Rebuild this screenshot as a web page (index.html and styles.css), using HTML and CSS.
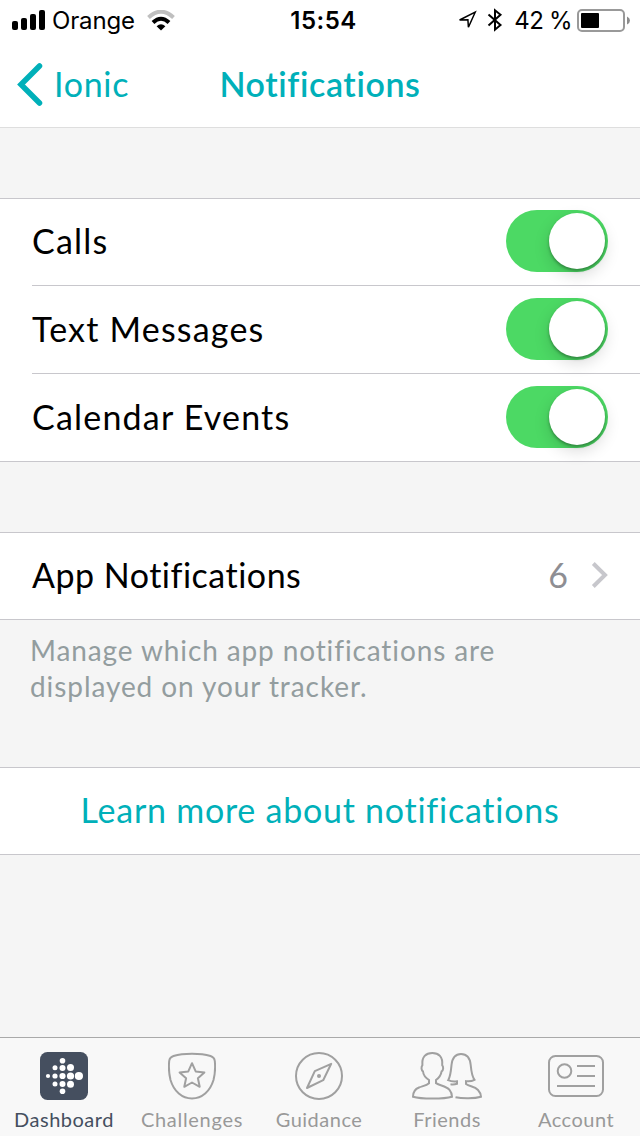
FILE: index.html
```html
<!DOCTYPE html>
<html lang="en">
  <head>
    <meta charset="UTF-8" />
    <meta name="viewport" content="width=device-width, initial-scale=1.0" />
    <title>Notifications</title>
    <link rel="stylesheet" href="styles.css">
  </head>
  <body>
    <div class="status-bar">
      <div class="status-left">
        <svg class="signal" width="34" height="20" viewBox="0 0 34 20">
          <rect x="0" y="11" width="6" height="9" rx="2" />
          <rect x="9" y="8" width="6" height="12" rx="2" />
          <rect x="18" y="4" width="6" height="16" rx="2" />
          <rect x="27" y="0" width="6" height="20" rx="2" />
        </svg>
        <span class="carrier">Orange</span>
        <svg class="wifi" width="28" height="21" viewBox="0 0 28 21">
          <path d="M1.5 7.5 Q14 -4 26.5 7.5" fill="none" stroke="#bfbfbf" stroke-width="4" />
          <path d="M6 12.5 Q14 5 22 12.5" fill="none" stroke="#000" stroke-width="4" />
          <path d="M9.6 16.2 Q14 12.4 18.4 16.2 L14 20.5 Z" />
        </svg>
      </div>
      <span class="time">15:54</span>
      <div class="status-right">
        <svg class="location" width="20" height="20" viewBox="0 0 20 20">
          <path d="M1.6 10 L17.2 2.2 L10.4 17.2 L9.9 9.8 Z" fill="none" stroke="#000" stroke-width="1.5" />
        </svg>
        <svg class="bluetooth" width="16" height="24" viewBox="0 0 16 24">
          <path d="M1.5 6.5 L13.5 17 L8 21.7 V2.3 L13.5 6.8 L1.5 17.5" fill="none" stroke="#000" stroke-width="2" />
        </svg>
        <span class="percent">42 %</span>
        <svg class="battery" width="54" height="24" viewBox="0 0 54 24">
          <rect x="1" y="1" width="46" height="21" rx="4" fill="none" stroke="#999" stroke-width="2" />
          <rect x="4" y="4" width="18" height="15" rx="1" />
          <path d="M50 7.5 Q53 9 53 11.5 Q53 14 50 15.5 Z" fill="#8c8c8c" />
        </svg>
      </div>
    </div>

    <div class="nav-bar">
      <a class="back">
        <svg width="28" height="44" viewBox="0 0 28 44">
          <path d="M22.5 4 L4 22.5 L22.5 41" fill="none" stroke="#00b0b9" stroke-width="5.5" stroke-linecap="round" />
        </svg>
        <span class="back-label">Ionic</span>
      </a>
      <h1>Notifications</h1>
    </div>

    <div class="content">
      <div class="list">
        <div class="row">
          <span class="calls">Calls</span>
          <div class="switch"><div class="knob"></div></div>
        </div>
        <div class="row">
          <span class="texts">Text Messages</span>
          <div class="switch"><div class="knob"></div></div>
        </div>
        <div class="row">
          <span class="events">Calendar Events</span>
          <div class="switch"><div class="knob"></div></div>
        </div>
      </div>

      <div class="list">
        <div class="row">
          <span class="apps">App Notifications</span>
          <div class="detail">
            <span>6</span>
            <svg width="18" height="28" viewBox="0 0 18 28">
              <path d="M2.3 2.5 L14 14 L2.3 25.5" fill="none" stroke="#c7c7cc" stroke-width="4" />
            </svg>
          </div>
        </div>
      </div>
      <p class="hint">
        <span class="hint-first">Manage which app notifications are</span><br />
        <span class="hint-second">displayed on your tracker.</span>
      </p>

      <a class="learn-more">Learn more about notifications</a>
    </div>

    <div class="tab-bar">
      <div class="tab active">
        <svg width="48" height="48" viewBox="0 0 48 48">
          <rect width="48" height="48" rx="7.5" fill="#454f5f" />
          <g fill="#fff">
            <circle cx="8" cy="24" r="2.1" />
            <circle cx="15" cy="15.8" r="2.5" />
            <circle cx="15" cy="24" r="2.6" />
            <circle cx="15" cy="32" r="2.5" />
            <circle cx="22.5" cy="8.7" r="2.8" />
            <circle cx="22.5" cy="16" r="3" />
            <circle cx="22.5" cy="24" r="3.1" />
            <circle cx="22.5" cy="32" r="3" />
            <circle cx="22.5" cy="39.3" r="2.8" />
            <circle cx="30.5" cy="15.6" r="3.5" />
            <circle cx="30.5" cy="24" r="3.6" />
            <circle cx="30.5" cy="32.2" r="3.5" />
            <circle cx="38.9" cy="24" r="4.1" />
          </g>
        </svg>
        <span class="label-dashboard">Dashboard</span>
      </div>
      <div class="tab">
        <svg width="48" height="48" viewBox="0 0 48 48">
          <path d="M24 1.7 C31 1.7 38 2.6 42.5 4 C45.5 5 46.5 6.5 46.8 9 C47.3 14 47 22 45.5 28 C42 39.5 34 46.5 24 46.5 C14 46.5 6 39.5 2.5 28 C1 22 0.7 14 1.2 9 C1.5 6.5 2.5 5 5.5 4 C10 2.6 17 1.7 24 1.7 Z" />
          <path d="M24 11.2 L27.7 19.4 L36.4 20.4 L29.9 26.2 L31.7 34.8 L24 30.5 L16.3 34.8 L18.1 26.2 L11.6 20.4 L20.3 19.4 Z" stroke-linejoin="round" />
        </svg>
        <span class="label-challenges">Challenges</span>
      </div>
      <div class="tab shifted">
        <svg width="48" height="48" viewBox="0 0 48 48">
          <circle cx="24" cy="24" r="23" />
          <path d="M36.2 11.8 L19.8 19.2 L12 36 L28.2 28.2 Z" stroke-linejoin="round" />
          <circle cx="24" cy="24" r="2" class="dot" />
        </svg>
        <span class="label-guidance">Guidance</span>
      </div>
      <div class="tab shifted">
        <svg width="70" height="48" viewBox="0 0 70 48">
          <path d="M17 28 C13.5 25.8 11.3 22.5 11 19.5 C9.3 18.6 9 15 10.4 13.2 C9.6 4.5 14 1 20.3 1 C26.6 1 31 4.5 30.2 13.2 C31.7 15 31.4 18.6 29.6 19.5 C29 22.8 27.1 25.8 24 28 V31.2 C28 33.8 34 33.8 37.5 37.8 C39.5 40.2 40 43 40 44.7 C32 47.2 9 47.2 1 44.7 C1 40.2 3.2 37 7 35.5 C11 34 14.8 33.3 17 31.2 Z" />
          <path d="M38.5 32.3 C40.5 32.6 43 32.5 45 31.8 V29.3 C42 29.7 39 29.5 36.2 28.2 C38.5 24.5 39 18.5 39.5 13 C40.3 5.5 43.5 2 49 2 C54.5 2 58 5.5 58.7 13 C59.2 18.5 60 24.5 62.5 27.8 C60 29.2 57 29.6 54 29.2 V32 C57.5 34.6 62.5 34.3 66 38 C68 40.2 69 42.7 69 44.7 C62.5 46.7 50.5 46.8 43.5 45.2" />
        </svg>
        <span class="label-friends">Friends</span>
      </div>
      <div class="tab">
        <svg width="56" height="48" viewBox="0 0 56 48">
          <rect x="1" y="4" width="54" height="40" rx="6.5" />
          <circle cx="16.5" cy="19" r="6.8" />
          <path d="M29 14 H47 M29 24 H47 M9 34 H47" />
        </svg>
        <span class="label-account">Account</span>
      </div>
    </div>
  </body>
</html>
```
FILE: styles.css
```css
* {
  box-sizing: border-box;
}

body {
  margin: 0;
  height: 1136px;
  display: flex;
  flex-direction: column;
  background: #f5f5f5;
  color: #000;
  font-family: Lato, sans-serif;
  font-size: 34px;
  line-height: 40px;
  font-variant-ligatures: none;
  overflow: hidden;
}

svg {
  display: block;
  flex: none;
}

span {
  white-space: nowrap;
}

/* Status bar */
.status-bar {
  display: grid;
  grid-template-columns: 1fr auto 1fr;
  height: 40px;
  padding: 1px 11px 0 12px;
  background: #fff;
  font-family: Inter, sans-serif;
  font-size: 24px;
  line-height: 40px;
}

.status-left,
.status-right {
  display: flex;
  align-items: center;
  height: 40px;
}

.status-right {
  justify-content: flex-end;
}

.signal {
  margin-top: -2px;
}

.carrier {
  margin-left: 6px;
  letter-spacing: -0.15px;
}

.wifi {
  margin-left: 12px;
  margin-top: -1px;
}

.time {
  margin-left: 6px;
  font-weight: 600;
  letter-spacing: 0.5px;
}

.location {
  margin-top: -2px;
}

.bluetooth {
  margin: -2px 11px 0 9px;
}

.percent {
  letter-spacing: -0.7px;
}

.battery {
  margin-left: 5px;
  margin-right: -2px;
}

/* Navigation bar */
.nav-bar {
  display: grid;
  grid-template-columns: 1fr auto 1fr;
  align-items: center;
  height: 88px;
  border-bottom: 1px solid #dedede;
  background: #fff;
  color: #00b0b9;
}

.back {
  display: flex;
  align-items: center;
  padding-left: 17px;
}

.back-label {
  margin-left: 9px;
  letter-spacing: 0.7px;
}

h1 {
  margin: 0;
  font-size: 34px;
  font-weight: 600;
  letter-spacing: 0.6px;
}

/* Grouped lists */
.content {
  flex: 1;
}

.list {
  margin-top: 70px;
  padding-left: 32px;
  border-top: 1px solid #c8c7cc;
  border-bottom: 1px solid #c8c7cc;
  background: #fff;
}

.row {
  display: flex;
  justify-content: space-between;
  align-items: center;
  height: 86px;
  padding: 0 32px 2px 0;
}

.row + .row {
  height: 88px;
  padding-bottom: 1px;
  border-top: 1px solid #c8c7cc;
}

.calls,
.texts,
.events {
  letter-spacing: 1.2px;
}

.apps {
  letter-spacing: 0.5px;
}

.switch {
  width: 102px;
  height: 62px;
  padding: 3px 3px 3px 43px;
  border-radius: 31px;
  background: #4cd964;
}

.knob {
  width: 56px;
  height: 56px;
  border-radius: 50%;
  background: #fff;
  box-shadow: 0 6px 16px rgba(0, 0, 0, 0.15), 0 2px 3px rgba(0, 0, 0, 0.3);
}

.detail {
  display: flex;
  align-items: center;
  gap: 23px;
  margin-right: -1px;
  color: #8e8e93;
}

.hint {
  margin: 0;
  padding: 12px 30px 0;
  height: 147px;
  color: #939d9f;
  font-size: 28px;
  line-height: 36px;
}

.hint-first {
  letter-spacing: 0.88px;
}

.hint-second {
  letter-spacing: 0.92px;
}

.learn-more {
  display: block;
  height: 88px;
  border-top: 1px solid #c8c7cc;
  border-bottom: 1px solid #c8c7cc;
  background: #fff;
  color: #00b0b9;
  line-height: 84px;
  letter-spacing: 0.75px;
  text-align: center;
}

/* Tab bar */
.tab-bar {
  display: grid;
  grid-template-columns: repeat(5, 128px);
  height: 99px;
  border-top: 1px solid #a9a9a9;
  background: #f8f8f8;
}

.tab {
  display: flex;
  flex-direction: column;
  align-items: center;
  padding-top: 14px;
  color: #999;
  font-size: 20px;
  line-height: 24px;
  letter-spacing: 0.5px;
}

.shifted {
  padding-right: 2px;
}

.tab svg {
  margin-bottom: 7px;
  fill: none;
  stroke: #a0a0a0;
  stroke-width: 2;
}

.tab .dot {
  fill: #a0a0a0;
  stroke: none;
}

.label-challenges {
  letter-spacing: 0.7px;
}

.tab.active {
  color: #454f5f;
}

.tab.active svg {
  stroke: none;
}
```
